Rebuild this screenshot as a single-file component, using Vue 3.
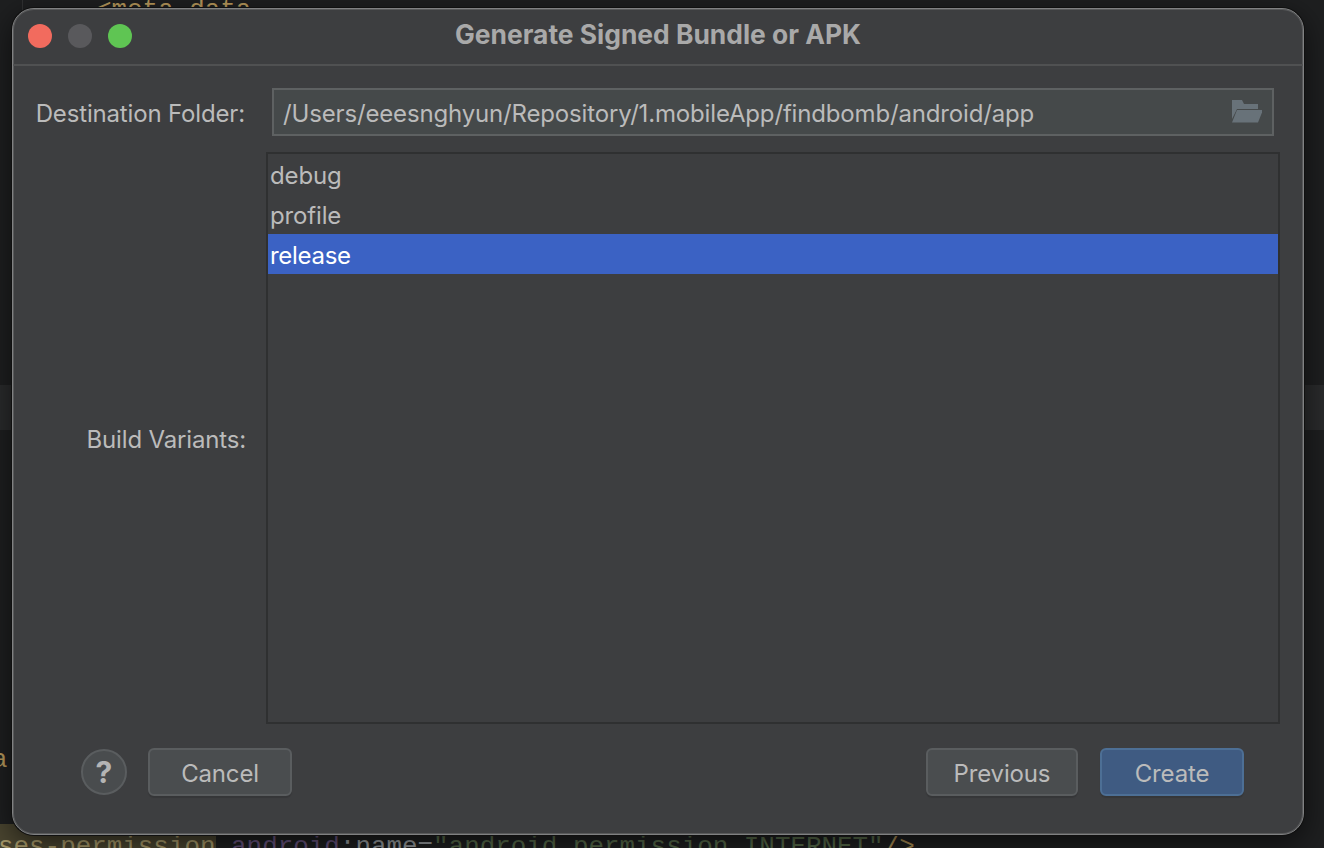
<script setup>
const variants = [
  { name: 'debug', selected: false },
  { name: 'profile', selected: false },
  { name: 'release', selected: true },
]
</script>

<template>
  <div class="desktop">
    <div class="editor" aria-hidden="true">
      <div class="gutter"></div>
      <div class="code code-top">&lt;meta-data</div>
      <div class="band"></div>
      <div class="code code-a">a</div>
      <div class="code code-bottom"><span class="hl">ses-permission</span> <span class="attr">android</span><span class="plain">:name=</span><span class="str">"android.permission.INTERNET"</span><span class="tag">/&gt;</span></div>
    </div>

    <section class="dialog">
      <header class="titlebar">
        <div class="lights">
          <span class="light red"></span>
          <span class="light grey"></span>
          <span class="light green"></span>
        </div>
        <h1 class="title">Generate Signed Bundle or APK</h1>
      </header>

      <div class="body">
        <div class="row-folder">
          <label class="label label-folder">Destination Folder:</label>
          <div class="input">
            <span class="path">/Users/eeesnghyun/Repository/1.mobileApp/findbomb/android/app</span>
            <svg class="folder" width="30" height="24" viewBox="0 0 30 24">
              <path d="M0 0h10l2 4h14v5H5L0 19z" fill="#687279" />
              <path d="M5 10h26l-5 12.500H0z" fill="#687279" />
            </svg>
          </div>
        </div>

        <div class="row-variants">
          <label class="label label-variants">Build Variants:</label>
          <ul class="list">
            <li v-for="v in variants" :key="v.name" class="item" :class="{ selected: v.selected }">{{ v.name }}</li>
          </ul>
        </div>

        <footer class="actions">
          <button class="help" type="button">?</button>
          <button class="btn cancel" type="button">Cancel</button>
          <span class="spacer"></span>
          <button class="btn previous" type="button">Previous</button>
          <button class="btn create" type="button">Create</button>
        </footer>
      </div>
    </section>
  </div>
</template>

<style>
html, body { margin: 0; background: #1e1f20; overflow: hidden; }
</style>

<style scoped>
.desktop {
  position: relative;
  width: 1324px;
  height: 848px;
  overflow: hidden;
  background: #1e1f20;
  font-family: Inter, "Liberation Sans", sans-serif;
}
.editor { position: absolute; inset: 0; }
.gutter { position: absolute; left: 22px; top: 0; bottom: 0; width: 1px; background: #303132; }
.band { position: absolute; left: 0; right: 0; top: 385px; height: 45px; background: #2a2b2c; }
.code {
  position: absolute;
  font-family: "Liberation Mono", monospace;
  font-size: 25.900px;
  line-height: 30px;
  white-space: pre;
  color: #b99a5c;
}
.code-top { left: 96px; top: -5px; }
.code-a { left: -8px; top: 745px; }
.code-bottom { left: -2px; top: 832px; color: #a9b0b8; }
.hl { background: #4a4530; color: #a89a6a; padding-top: 8px; }
.attr { color: #66527c; }
.plain { color: #969a9e; }
.str { color: #566a4a; }
.tag { color: #a88c54; }

.dialog {
  position: absolute;
  left: 12px;
  top: 8px;
  width: 1292px;
  height: 827px;
  box-sizing: border-box;
  border: 1px solid #808182;
  border-radius: 22px;
  background: #3d3e40;
  box-shadow: inset 0 0 0 1px #58595a, 0 0 0 1px #101010, 0 8px 30px rgba(0, 0, 0, 0.6);
  color: #bbbbbb;
  overflow: hidden;
}
.titlebar {
  position: relative;
  height: 57px;
  box-sizing: border-box;
  padding-bottom: 6px;
  border-bottom: 2px solid #505152;
  display: flex;
  align-items: center;
  justify-content: center;
}
.lights {
  position: absolute;
  left: 15px;
  top: 15px;
  display: flex;
  gap: 16px;
}
.light { width: 24px; height: 24px; border-radius: 50%; }
.red { background: #f26b5e; }
.grey { background: #59595c; }
.green { background: #5fc553; }
.title {
  margin: 0;
  font-size: 26.400px;
  font-weight: 700;
  color: #a9a9a9;
  letter-spacing: 0;
}
.label {
  font-size: 24px;
  letter-spacing: -0.16px;
  color: #bbbbbb;
  text-align: right;
  display: block;
  padding-top: 2px;
}
.row-folder {
  display: flex;
  align-items: center;
  margin-top: 22px;
  height: 48px;
}
.label-folder { width: 232px; margin-right: 27px; }
.input {
  width: 1002px;
  height: 48px;
  box-sizing: border-box;
  border: 2px solid #5e6162;
  background: #45494a;
  display: flex;
  align-items: center;
  justify-content: space-between;
  padding: 0 10px 0 9px;
}
.path { font-size: 24px; letter-spacing: -0.16px; color: #bbbbbb; padding-top: 2px; }
.folder { display: block; }
.row-variants {
  display: flex;
  align-items: center;
  margin-top: 16px;
}
.label-variants { width: 233px; margin-right: 20px; }
.list {
  list-style: none;
  margin: 0;
  padding: 0;
  width: 1014px;
  height: 572px;
  box-sizing: border-box;
  border: 2px solid #2f3031;
  background: #3d3e40;
}
.item {
  height: 40px;
  line-height: 44px;
  font-size: 24px;
  letter-spacing: -0.15px;
  padding-left: 2px;
  color: #bbbbbb;
}
.item.selected { background: #3b62c4; color: #ffffff; letter-spacing: -0.3px; }
.actions {
  display: flex;
  align-items: center;
  margin-top: 24px;
  padding-left: 68px;
  padding-right: 59px;
}
.spacer { flex: 1; }
.help {
  width: 46px;
  height: 46px;
  padding: 0;
  box-sizing: border-box;
  border-radius: 50%;
  border: 2px solid #5a5d5f;
  background: #494c4e;
  color: #b4b4b4;
  font-family: inherit;
  font-size: 30px;
  font-weight: 700;
  line-height: 1;
  margin-right: 21px;
}
.btn {
  height: 48px;
  box-sizing: border-box;
  border-radius: 6px;
  border: 2px solid #5a5d5f;
  background: #4a4d4f;
  color: #bbbbbb;
  font-family: inherit;
  font-size: 24px;
  letter-spacing: -0.16px;
  padding: 2px 0 0;
  box-shadow: 0 2px 1px rgba(0, 0, 0, 0.12);
}
.cancel { width: 144px; }
.previous { width: 152px; margin-right: 22px; }
.create { width: 144px; background: #3f5b82; border-color: #4d6f95; }
</style>
